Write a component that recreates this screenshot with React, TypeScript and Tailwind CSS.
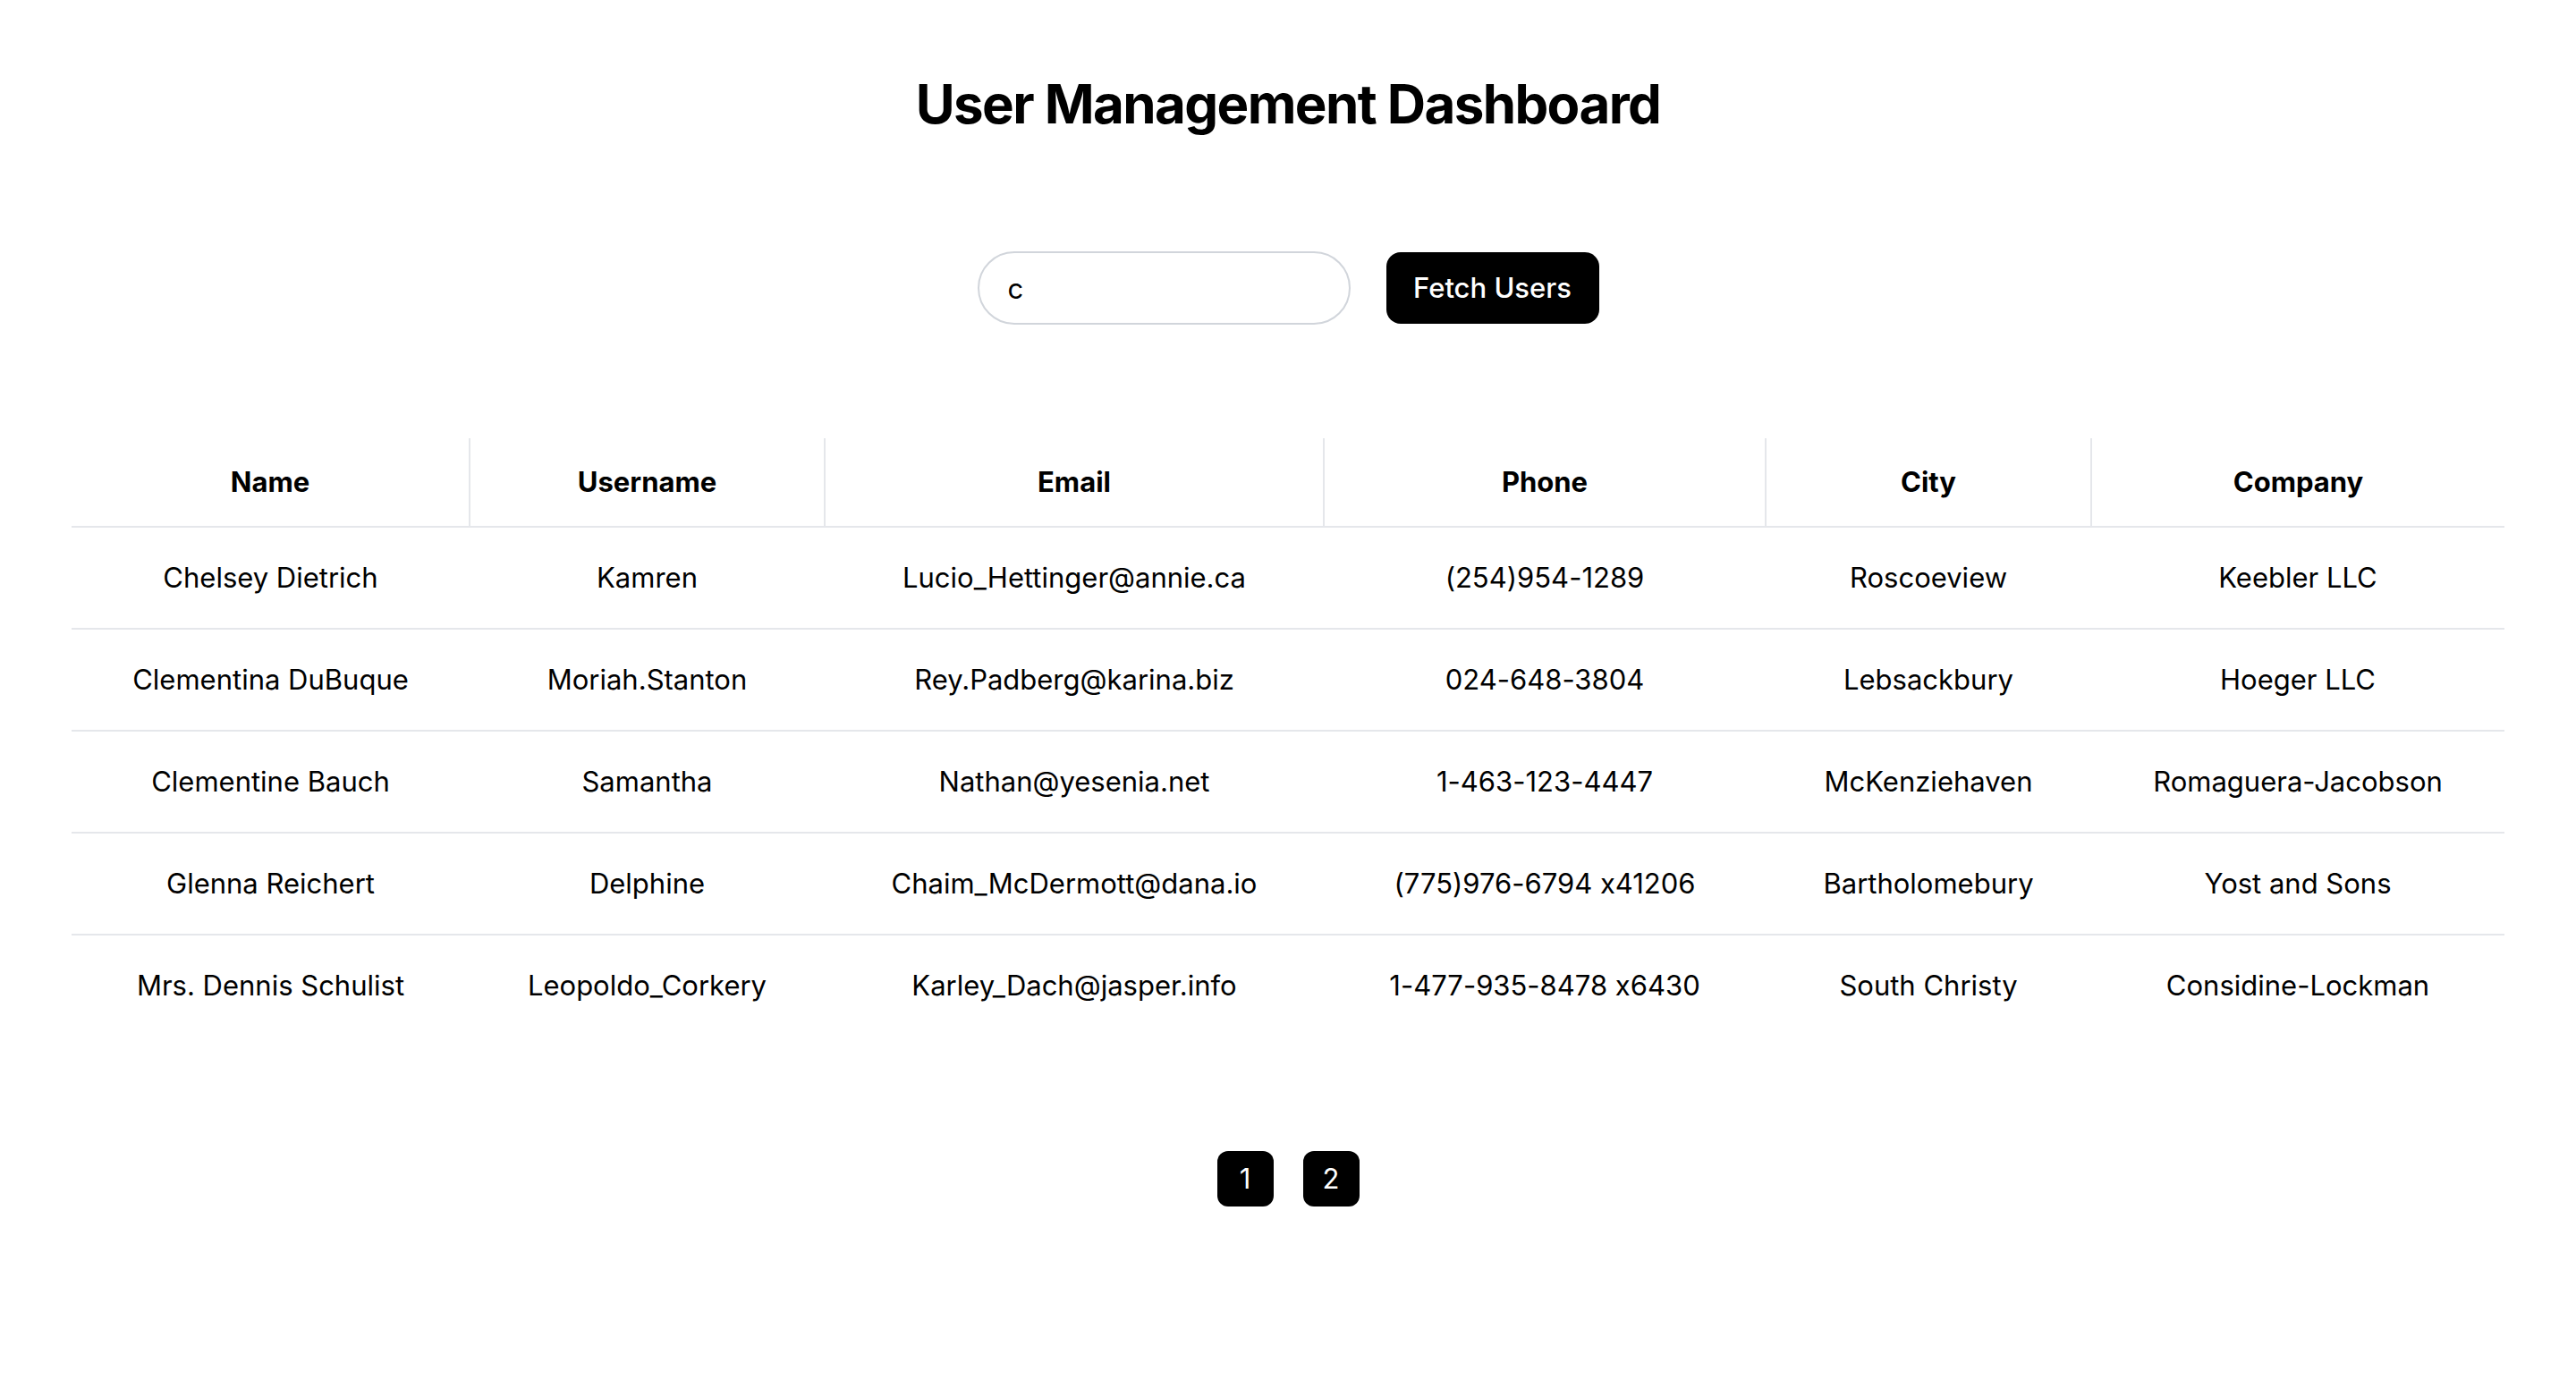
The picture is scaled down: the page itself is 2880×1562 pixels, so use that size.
import React from "react";

const users = [
  ["Chelsey Dietrich", "Kamren", "Lucio_Hettinger@annie.ca", "(254)954-1289", "Roscoeview", "Keebler LLC"],
  ["Clementina DuBuque", "Moriah.Stanton", "Rey.Padberg@karina.biz", "024-648-3804", "Lebsackbury", "Hoeger LLC"],
  ["Clementine Bauch", "Samantha", "Nathan@yesenia.net", "1-463-123-4447", "McKenziehaven", "Romaguera-Jacobson"],
  ["Glenna Reichert", "Delphine", "Chaim_McDermott@dana.io", "(775)976-6794 x41206", "Bartholomebury", "Yost and Sons"],
  ["Mrs. Dennis Schulist", "Leopoldo_Corkery", "Karley_Dach@jasper.info", "1-477-935-8478 x6430", "South Christy", "Considine-Lockman"],
];

const headers = ["Name", "Username", "Email", "Phone", "City", "Company"];
const widths = ["w-[445px]", "w-[397px]", "w-[558px]", "w-[494px]", "w-[364px]", "w-[462px]"];

export default function App() {
  return (
    <div className="min-h-[1562px] w-full bg-white text-black font-['Inter',sans-serif] [font-feature-settings:'calt'_0]">
      <div className="flex flex-col items-center pt-[80px] px-[80px]">
        <h1 className="text-[60px] leading-[72px] font-bold tracking-[-1.6px]">User Management Dashboard</h1>
        <div className="mt-[129px] flex items-center gap-[40px]">
          <input
            defaultValue="c"
            className="w-[417px] h-[82px] rounded-full border-2 border-[#d1d5db] px-[32px] text-[31px] outline-none font-['Inter',sans-serif]"
          />
          <button className="h-[80px] w-[238px] rounded-[16px] bg-black text-white text-[31px] font-medium">
            Fetch Users
          </button>
        </div>
        <table className="mt-[127px] w-full table-fixed border-collapse">
          <colgroup>
            {widths.map((w, i) => (
              <col key={i} className={w} />
            ))}
          </colgroup>
          <thead>
            <tr className="border-b-2 border-[#e5e7eb]">
              {headers.map((h, i) => (
                <th
                  key={h}
                  className={
                    "h-[99px] p-0 text-center text-[31px] font-bold " +
                    (i < headers.length - 1 ? "border-r-2 border-[#e5e7eb]" : "")
                  }
                >
                  {h}
                </th>
              ))}
            </tr>
          </thead>
          <tbody>
            {users.map((u, r) => (
              <tr key={r} className={r < users.length - 1 ? "border-b-2 border-[#e5e7eb]" : ""}>
                {u.map((c, i) => (
                  <td key={i} className="h-[114px] p-0 text-center text-[31px] font-normal">
                    {c}
                  </td>
                ))}
              </tr>
            ))}
          </tbody>
        </table>
        <div className="mt-[128px] flex items-center gap-[33px]">
          <button className="w-[63px] h-[62px] rounded-[12px] bg-black text-white text-[31px] font-normal">1</button>
          <button className="w-[63px] h-[62px] rounded-[12px] bg-black text-white text-[31px] font-normal">2</button>
        </div>
      </div>
    </div>
  );
}
